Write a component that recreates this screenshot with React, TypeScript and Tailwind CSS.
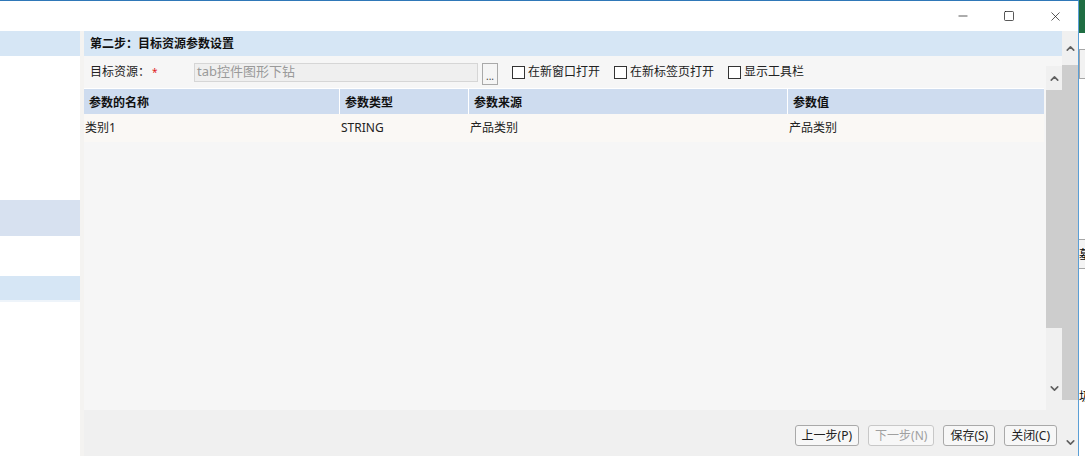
import { Minus, Square, X, ChevronUp, ChevronDown } from 'lucide-react';

const font = { fontFamily: '"Noto Sans", "Noto Sans CJK SC", sans-serif' };

const columns = [
  { label: '参数的名称', width: 'w-[256px]' },
  { label: '参数类型', width: 'w-[129px]' },
  { label: '参数来源', width: 'w-[319px]' },
  { label: '参数值', width: 'flex-1' },
];

const rows = [['类别1', 'STRING', '产品类别', '产品类别']];

const Checkbox = ({ label }: { label: string }) => (
  <label className="flex items-center gap-[3px] text-[12px] text-[#222]">
    <span className="w-[13px] h-[13px] border border-[#333] bg-white" />
    <span>{label}</span>
  </label>
);

const Button = ({ label, disabled }: { label: string; disabled?: boolean }) => (
  <button
    className={`h-[21px] px-[6px] rounded-[3px] border bg-[#f7f7f7] text-[12px] leading-none ${
      disabled ? 'border-[#c8c8c8] text-[#a0a0a0]' : 'border-[#a9a9a9] text-[#222]'
    }`}
  >
    {label}
  </button>
);

export default function App() {
  return (
    <div className="w-[1085px] h-[456px] flex overflow-hidden bg-white" style={font}>
      {/* Window */}
      <div className="w-[1079px] h-full flex flex-col border-t border-r border-t-[#2f78b8] border-r-[#5b9fd6]">
        {/* Title bar */}
        <div className="h-[30px] flex justify-end items-center bg-white text-[#111]">
          <div className="w-[46px] flex justify-center">
            <Minus className="w-[14px] h-[14px]" strokeWidth={1.2} />
          </div>
          <div className="w-[46px] flex justify-center">
            <Square className="w-[12px] h-[12px]" strokeWidth={1.4} />
          </div>
          <div className="w-[46px] flex justify-center">
            <X className="w-[15px] h-[15px]" strokeWidth={1.1} />
          </div>
        </div>

        {/* Body */}
        <div className="flex-1 flex min-h-0">
          {/* Left panel */}
          <div className="w-[80px] flex flex-col bg-white">
            <div className="h-[25px] bg-[#d6e6f5]" />
            <div className="h-[144px]" />
            <div className="h-[36px] bg-[#d7e1f0]" />
            <div className="h-[40px]" />
            <div className="h-[24px] bg-[#d6e6f5]" />
            <div className="h-[2px] bg-[#eef4fa]" />
          </div>

          {/* Main */}
          <div className="flex-1 flex bg-[#f4f3f1]">
            <div className="flex-1 flex flex-col pl-[4px]">
              {/* Step header */}
              <div className="h-[25px] flex items-center px-[6px] bg-[#d6e6f5] text-[12px] font-bold text-[#111]">
                第二步：目标资源参数设置
              </div>

              <div className="flex-1 flex flex-col bg-[#f6f6f6]">
                <div className="flex-1 flex">
                  <div className="flex-1 flex flex-col">
                    {/* Form row */}
                    <div className="h-[32px] flex items-center text-[12px] text-[#222]">
                      <span className="ml-[6px] w-[104px] flex items-center">
                        目标资源：<span className="ml-[2px] text-[10px] text-[#e0201b]">*</span>
                      </span>
                      <div className="w-[284px] h-[19px] flex items-center px-[2px] border border-[#d6d6d6] bg-[#efefef] text-[13px] text-[#9a9a9a]">
                        tab控件图形下钻
                      </div>
                      <div className="ml-[4px] mt-[3px] w-[16px] h-[22px] flex items-end justify-center pb-[3px] border border-[#a9a9a9] bg-[#f5f5f5] text-[10px] leading-none text-[#444]">
                        ...
                      </div>
                      <div className="ml-[14px] flex gap-[14px]">
                        <Checkbox label="在新窗口打开" />
                        <Checkbox label="在新标签页打开" />
                        <Checkbox label="显示工具栏" />
                      </div>
                    </div>

                    {/* Table */}
                    <div className="flex flex-col mr-[2px]">
                      <div className="h-[26px] flex bg-[#cedcef] border-t border-white">
                        {columns.map((c) => (
                          <div
                            key={c.label}
                            className={`${c.width} flex items-center pl-[5px] pt-[2px] border-r border-white last:border-r-0 text-[12px] font-bold text-[#111]`}
                          >
                            {c.label}
                          </div>
                        ))}
                      </div>
                      {rows.map((r) => (
                        <div key={r[0]} className="h-[28px] flex bg-[#faf8f5]">
                          {r.map((cell, i) => (
                            <div
                              key={i}
                              className={`${columns[i].width} flex items-center pl-[1px] text-[12px] text-[#222]`}
                            >
                              {cell}
                            </div>
                          ))}
                        </div>
                      ))}
                    </div>
                  </div>

                  {/* Inner scrollbar */}
                  <div className="w-[16px] mt-[10px] flex flex-col items-center bg-[#f0f0f0]">
                    <div className="h-[24px] flex items-center">
                      <ChevronUp className="w-[13px] h-[13px] text-[#606060]" strokeWidth={3} />
                    </div>
                    <div className="w-[16px] h-[238px] bg-[#cdcdcd]" />
                    <div className="flex-1" />
                    <div className="h-[24px] flex items-center mb-[10px]">
                      <ChevronDown className="w-[13px] h-[13px] text-[#606060]" strokeWidth={3} />
                    </div>
                  </div>
                </div>

                {/* Footer */}
                <div className="h-[46px] flex justify-end items-center gap-[9px] pr-[5px] pt-[5px] bg-[#f0f0f0]">
                  <Button label="上一步(P)" />
                  <Button label="下一步(N)" disabled />
                  <Button label="保存(S)" />
                  <Button label="关闭(C)" />
                </div>
              </div>
            </div>

            {/* Outer scrollbar */}
            <div className="w-[16px] flex flex-col items-center bg-[#f0f0f0]">
              <div className="h-[34px] flex items-center">
                <ChevronUp className="w-[13px] h-[13px] text-[#606060]" strokeWidth={3} />
              </div>
              <div className="w-[16px] h-[335px] bg-[#cdcdcd]" />
              <div className="flex-1" />
              <div className="h-[24px] flex items-center mb-[2px]">
                <ChevronDown className="w-[13px] h-[13px] text-[#606060]" strokeWidth={3} />
              </div>
            </div>
          </div>
        </div>
      </div>

      {/* Desktop behind */}
      <div className="w-[6px] h-full flex flex-col bg-white overflow-hidden">
        <div className="h-[33px] bg-[#1f6e43]" />
        <div className="h-[16px]" />
        <div className="h-[30px] border-l border-y border-[#a6a6a6] bg-[#f2f2f2]" />
        <div className="h-[160px]" />
        <div className="h-[30px] border-y border-[#a6a6a6] bg-[#f4f4f4] text-[12px] leading-[30px] text-black">
          墓
        </div>
        <div className="h-[118px]" />
        <div className="h-[20px] text-[12px] leading-[20px] text-black">圾</div>
      </div>
    </div>
  );
}
